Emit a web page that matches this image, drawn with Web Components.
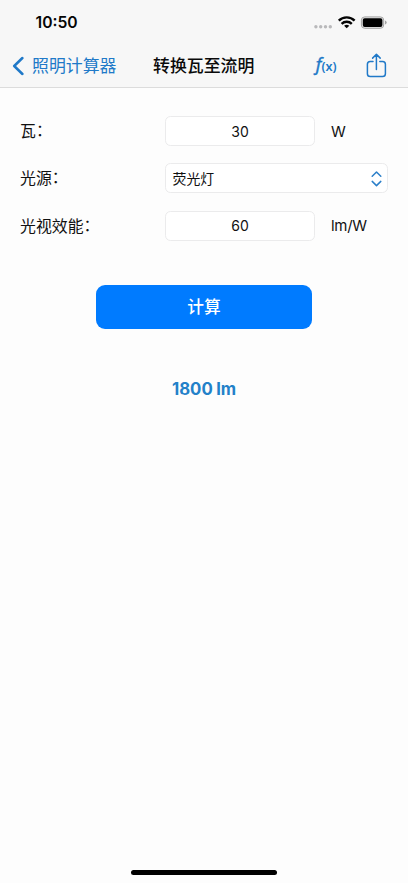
<!DOCTYPE html>
<html lang="zh-CN">
<head>
<meta charset="utf-8">
<title>转换瓦至流明</title>
<style>
html,body{margin:0;height:100%;background:#fdfdfd;overflow:hidden}
body{font-family:Inter,"Noto Sans CJK SC",sans-serif;color:#111}
</style>
</head>
<body>
<lumen-app></lumen-app>
<script>
const define = (name, html) => customElements.define(name, class extends HTMLElement {
  constructor() {
    super();
    const t = document.createElement('template');
    t.innerHTML = html;
    this.attachShadow({mode: 'open'}).append(t.content.cloneNode(true));
  }
});

define('status-bar', `<style>
:host{display:flex;height:44px;box-sizing:border-box;padding:1px 21px 0 35.5px;align-items:center;justify-content:space-between;color:#050505}
.time{font-size:15.7px;font-weight:600;line-height:20px;padding-top:1px}
svg{display:block}
</style>
<span class="time">10:50</span>
<svg width="74" height="18" viewBox="0 0 74 18">
<g fill="#b9b9bb"><circle cx="2.9" cy="12.8" r="1.7"/><circle cx="7.7" cy="12.8" r="1.7"/><circle cx="12.5" cy="12.8" r="1.7"/><circle cx="17.3" cy="12.8" r="1.7"/></g>
<g fill="none" stroke="#050505" stroke-width="2.4"><path d="M25.8 6.7C30.1 2.3 37.3 2.3 41.6 6.7"/><path d="M28.6 9.8C31.4 7.1 36 7.1 38.8 9.8"/></g>
<path d="M33.7 14.3L31.1 11.7Q33.7 9.8 36.3 11.7Z" fill="#050505"/>
<rect x="48.4" y="2.9" width="22.3" height="11.4" rx="3.3" fill="#e4e4e4" stroke="#a3a3a3"/>
<rect x="49.8" y="4.2" width="19.6" height="8.8" rx="1.9" fill="#000"/>
<path d="M72 6.6Q73.7 7.1 73.7 8.5T72 10.4Z" fill="#a3a3a3"/>
</svg>`);

define('nav-bar', `<style>
:host{display:grid;grid-template-columns:141px auto 1fr;height:44px;box-sizing:border-box;padding:0 20px 0 12px;align-items:center;border-bottom:1px solid #dcdcdc;color:#2079c8}
.back{display:flex;align-items:center;gap:8px;font-size:16.9px;line-height:24px;white-space:nowrap}
.title{color:#0a0a0a;font-size:16.9px;font-weight:500;line-height:24px;white-space:nowrap}
.actions{display:flex;justify-content:flex-end;align-items:center;gap:29.5px}
.fx{display:flex;align-items:baseline;line-height:24px;white-space:nowrap}
.f{font:italic 400 18px/24px "Open Sans",sans-serif;-webkit-text-stroke:.45px}
.x{font:600 12.5px/24px "Noto Sans",sans-serif}
svg{display:block;fill:none;stroke:currentColor}
</style>
<div class="back"><svg width="12" height="20" viewBox="0 0 12 20" stroke-width="2.5" stroke-linecap="round" stroke-linejoin="round"><path d="M10.4 2L2.2 10L10.4 18"/></svg><span><slot name="back"></slot></span></div>
<div class="title"><slot></slot></div>
<div class="actions"><div class="fx"><span class="f">f</span><span class="x">(x)</span></div>
<svg width="22" height="26" viewBox="0 0 22 26" stroke-width="1.5" stroke-linecap="round" stroke-linejoin="round"><path d="M7 8.4H4.2Q1.4 8.4 1.4 11.2V20.8Q1.4 23.6 4.2 23.6H16.6Q19.4 23.6 19.4 20.8V11.2Q19.4 8.4 16.6 8.4H13.8M10.4 16.5V1.5M6.6 5.1L10.4 1.3L14.2 5.1"/></svg></div>`);

define('form-row', `<style>
:host{display:grid;grid-template-columns:145px 150px 1fr;height:30px;align-items:center;font-size:15px;line-height:22px}
:host([wide]){grid-template-columns:145px 1fr}
:host([wide]) .unit{display:none}
.label{display:flex;font-family:"Noto Sans CJK SC",sans-serif;font-size:15.9px;white-space:nowrap}
.colon{margin-top:-1px}
.unit{padding:1px 0 0 16px;white-space:nowrap;letter-spacing:-.3px}
</style>
<span class="label"><slot name="label"></slot><span class="colon">：</span></span><slot></slot><span class="unit"><slot name="unit"></slot></span>`);

const box = 'box-sizing:border-box;height:30px;border:1px solid #ebebec;border-radius:5.5px;background:#fff;align-items:center;';
define('number-field', `<style>:host{display:flex;${box}justify-content:center;font-size:14px;padding-top:1px}</style><slot></slot>`);
define('select-field', `<style>:host{display:flex;${box}justify-content:space-between;padding:1px 5px 0 6.5px;font-size:13.9px}svg{display:block}</style>
<span><slot></slot></span>
<svg width="11" height="18" viewBox="0 0 11 18" fill="none" stroke="#2b7fc9" stroke-width="1.5" stroke-linecap="round" stroke-linejoin="round"><path d="M1.2 6.2L5.5 2L9.8 6.2M1.2 11.4L5.5 15.6L9.8 11.4"/></svg>`);
define('primary-button', `<style>:host{display:flex;width:216px;height:44px;box-sizing:border-box;padding-top:1px;border-radius:9px;background:#007bff;color:#fff;align-items:center;justify-content:center;font-size:16.7px;font-weight:500;line-height:24px}</style><slot></slot>`);
define('result-text', `<style>:host{display:block;color:#2381c9;font-size:16.8px;font-weight:700;line-height:22px;word-spacing:-.5px}</style><slot></slot>`);
define('home-indicator', `<style>:host{display:block;width:146px;height:5px;border-radius:3px;background:#000}</style>`);

define('lumen-app', `<style>
:host{display:flex;flex-direction:column;width:408px;height:883px;background:#fdfdfd}
header{background:#f7f7f7}
main{flex:1;display:flex;flex-direction:column;align-items:center;padding:28px 20px 0}
.form{align-self:stretch;display:grid;gap:17.4px}
primary-button{margin-top:44px}
result-text{margin-top:49px}
footer{display:flex;justify-content:center;padding-bottom:8px}
</style>
<header><status-bar></status-bar><nav-bar><span slot="back">照明计算器</span>转换瓦至流明</nav-bar></header>
<main><div class="form">
<form-row><span slot="label">瓦</span><number-field>30</number-field><span slot="unit">W</span></form-row>
<form-row wide><span slot="label">光源</span><select-field>荧光灯</select-field></form-row>
<form-row><span slot="label">光视效能</span><number-field>60</number-field><span slot="unit">lm/W</span></form-row>
</div>
<primary-button>计算</primary-button>
<result-text>1800 lm</result-text>
</main>
<footer><home-indicator></home-indicator></footer>`);
</script>
</body>
</html>
